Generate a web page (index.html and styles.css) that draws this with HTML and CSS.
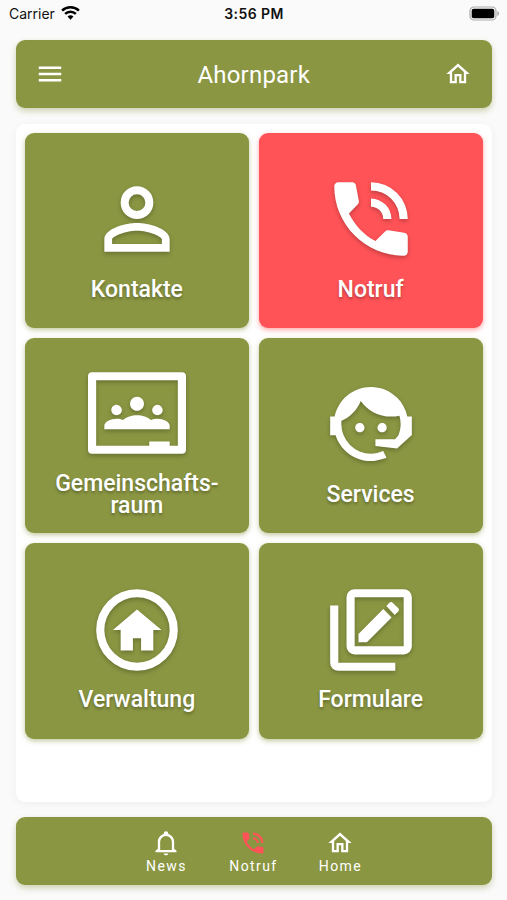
FILE: index.html
```html
<!DOCTYPE html>
<html lang="de">
<head>
    <meta charset="UTF-8">
    <meta name="viewport" content="width=device-width, initial-scale=1.0">
    <title>Ahornpark</title>
    <link rel="stylesheet" href="styles.css">
</head>
<body>
    <div class="statusbar">
        <div class="carrier">
            <span>Carrier</span>
            <svg class="wifi" viewBox="0 0 18 14">
                <path d="M1 5.2a11.5 11.5 0 0 1 16 0" />
                <path d="M3.9 8.3a7.3 7.3 0 0 1 10.2 0" />
                <path class="dot" d="M9 13.8L6.2 10.9a4 4 0 0 1 5.6 0z" />
            </svg>
        </div>
        <div class="time">3:56 PM</div>
        <div class="status-right">
            <svg class="battery" viewBox="0 0 31 15">
                <rect class="shell" x="1" y="1" width="26" height="13" rx="4" />
                <rect x="2.7" y="2.7" width="22.6" height="9.6" rx="2" />
                <path class="cap" d="M28.3 5c2.4.8 2.4 4.2 0 5z" />
            </svg>
        </div>
    </div>

    <header class="bar header">
        <svg class="icon menu" viewBox="0 0 24 24"><path d="M3 6h18v2H3zM3 11h18v2H3zM3 16h18v2H3z" /></svg>
        <h1>Ahornpark</h1>
        <svg class="icon" viewBox="0 0 24 24"><path d="M12 5.69L17 10.19V18H15V12H9V18H7V10.19L12 5.69M12 3L2 12H5V20H11V14H13V20H19V12H22" /></svg>
    </header>

    <main class="content">
        <a class="tile">
            <svg viewBox="0 0 24 24"><path d="M12 4a4 4 0 1 1 0 8a4 4 0 0 1 0-8m0 1.95a2.05 2.05 0 1 0 0 4.1a2.05 2.05 0 0 0 0-4.1M12 13c2.67 0 8 1.33 8 4v3H4v-3c0-2.67 5.33-4 8-4m0 1.9c-2.97 0-6.1 1.46-6.1 2.1v1.1h12.2V17c0-.64-3.13-2.1-6.1-2.1z" /></svg>
            <span>Kontakte</span>
        </a>
        <a class="tile alert">
            <svg viewBox="0 0 24 24"><path d="M15 12h2a5 5 0 0 0-5-5v2a3 3 0 0 1 3 3M19 12h2a9 9 0 0 0-9-9v2a7 7 0 0 1 7 7M4 3h3.4c.5 0 .86.35.92.85L9.03 7.6c.04.3-.05.58-.25.8L6.6 10.65c1.4 2.83 3.7 5.3 6.5 6.75l2.35-2.35c.23-.23.5-.33.82-.28l3.85.6c.5.06.88.45.88.95V20c0 .55-.45 1-1 1C10.61 21 3 13.39 3 4c0-.55.45-1 1-1z" /></svg>
            <span>Notruf</span>
        </a>
        <a class="tile">
            <svg viewBox="0 0 24 24"><path d="M23 2H1A1 1 0 0 0 0 3V21A1 1 0 0 0 1 22H23A1 1 0 0 0 24 21V3A1 1 0 0 0 23 2M22 20H20V19H15V20H2V4H22V20M10.29 9.71A1.71 1.71 0 0 1 12 8C12.95 8 13.71 8.77 13.71 9.71C13.71 10.66 12.95 11.43 12 11.43C11.05 11.43 10.29 10.66 10.29 9.71M5.71 11.29C5.71 10.58 6.29 10 7 10A1.29 1.29 0 0 1 8.29 11.29C8.29 12 7.71 12.57 7 12.57C6.29 12.57 5.71 12 5.71 11.29M15.71 11.29A1.29 1.29 0 0 1 17 10A1.29 1.29 0 0 1 18.29 11.29C18.29 12 17.71 12.57 17 12.57C16.29 12.57 15.71 12 15.71 11.29M20 15.14V16H4V15.14C4 14.2 5.55 13.43 7 13.43C7.55 13.43 8.11 13.54 8.6 13.73C9.35 13.04 10.7 12.57 12 12.57C13.3 12.57 14.65 13.04 15.4 13.73C15.89 13.54 16.45 13.43 17 13.43C18.45 13.43 20 14.2 20 15.14Z" /></svg>
            <span>Gemeinschafts-<br>raum</span>
        </a>
        <a class="tile">
            <svg viewBox="0 0 24 24"><path d="M18.72 14.76C19.07 13.91 19.26 13 19.26 12C19.26 11.28 19.15 10.59 18.96 9.95C18.31 10.1 17.63 10.18 16.92 10.18C13.86 10.18 11.15 8.67 9.5 6.34C8.61 8.5 6.91 10.26 4.77 11.22C4.73 11.47 4.73 11.74 4.73 12A7.27 7.27 0 0 0 12 19.27C13.05 19.27 14.06 19.04 14.97 18.63C15.54 19.72 15.8 20.26 15.78 20.26C14.14 20.81 12.87 21.08 12 21.08C9.58 21.08 7.27 20.13 5.57 18.42C4.53 17.38 3.76 16.11 3.33 14.73H2V10.18H3.09C3.93 6.04 7.6 2.92 12 2.92C14.4 2.92 16.71 3.87 18.42 5.58C19.69 6.84 20.54 8.45 20.89 10.18H22V14.73H21.94L18.38 18L13.08 17.4V15.73H17.91L18.72 14.76M9.27 11.77C9.57 11.77 9.86 11.89 10.07 12.11C10.28 12.32 10.4 12.61 10.4 12.91C10.4 13.21 10.28 13.5 10.07 13.71C9.86 13.92 9.57 14.04 9.27 14.04C8.64 14.04 8.13 13.54 8.13 12.91C8.13 12.28 8.64 11.77 9.27 11.77M14.72 11.77C15.35 11.77 15.85 12.28 15.85 12.91C15.85 13.54 15.35 14.04 14.72 14.04C14.09 14.04 13.58 13.54 13.58 12.91A1.14 1.14 0 0 1 14.72 11.77Z" /></svg>
            <span>Services</span>
        </a>
        <a class="tile">
            <svg viewBox="0 0 24 24"><path d="M12 2a10 10 0 1 1 0 20a10 10 0 0 1 0-20m0 2a8 8 0 1 0 0 16a8 8 0 0 0 0-16M12 7l6 5h-2v5h-3v-3h-2v3H8v-5H6.1z" /></svg>
            <span>Verwaltung</span>
        </a>
        <a class="tile">
            <svg viewBox="0 0 24 24"><path d="M4 20H17.95V22H4A2 2 0 0 1 2 20V6H4M8 2H20A2 2 0 0 1 22 4V16A2 2 0 0 1 20 18H8A2 2 0 0 1 6 16V4A2 2 0 0 1 8 2M8 4V16H20V4M8.94 12.96V15H11L17.04 8.93L15 6.85M16.5 5.3Q16.9 4.95 17.3 5.3L18.7 6.7Q19.05 7.1 18.7 7.45L17.8 8.3L15.75 6.15z" /></svg>
            <span>Formulare</span>
        </a>
    </main>

    <nav class="bar tabs">
        <a class="tab">
            <svg class="icon" viewBox="0 0 24 24"><path d="M10 21h4c0 .9-.9 1.6-2 1.6s-2-.7-2-1.6M21 18.6V20H3v-1.4l2-1.6v-6c0-3.1 2.03-5.83 5-6.71V4a2 2 0 0 1 4 0v.29c2.97.88 5 3.61 5 6.71v6l2 1.6M17 11a5 5 0 0 0-10 0v7h10z" /></svg>
            <span>News</span>
        </a>
        <a class="tab active">
            <svg class="icon" viewBox="0 0 24 24"><path d="M15 12h2a5 5 0 0 0-5-5v2a3 3 0 0 1 3 3M19 12h2a9 9 0 0 0-9-9v2a7 7 0 0 1 7 7M4 3h3.4c.5 0 .86.35.92.85L9.03 7.6c.04.3-.05.58-.25.8L6.6 10.65c1.4 2.83 3.7 5.3 6.5 6.75l2.35-2.35c.23-.23.5-.33.82-.28l3.85.6c.5.06.88.45.88.95V20c0 .55-.45 1-1 1C10.61 21 3 13.39 3 4c0-.55.45-1 1-1z" /></svg>
            <span>Notruf</span>
        </a>
        <a class="tab">
            <svg class="icon" viewBox="0 0 24 24"><path d="M12 5.69L17 10.19V18H15V12H9V18H7V10.19L12 5.69M12 3L2 12H5V20H11V14H13V20H19V12H22" /></svg>
            <span>Home</span>
        </a>
    </nav>
</body>
</html>
```
FILE: styles.css
```css
* {
    box-sizing: border-box;
}
body {
    margin: 0;
    height: 900px;
    padding: 0 15px 15px 15.5px;
    display: flex;
    flex-direction: column;
    overflow: hidden;
    background-color: #fafafa;
    font-family: Roboto, sans-serif;
    color: #fff;
}
svg {
    display: block;
    fill: currentColor;
    fill-rule: evenodd;
}
.statusbar {
    height: 40px;
    margin: 0 -7px 0 -6.5px;
    padding-bottom: 13px;
    display: grid;
    grid-template-columns: 1fr auto 1fr;
    align-items: center;
    font-family: Inter, sans-serif;
    font-size: 14px;
    color: #111;
}
.carrier {
    display: flex;
    align-items: center;
    gap: 6px;
}
.wifi {
    width: 19px;
    height: 15px;
    margin-top: -3px;
}
.wifi path {
    fill: none;
    stroke: #000;
    stroke-width: 2.3;
}
.wifi .dot {
    fill: #000;
    stroke: none;
}
.time {
    font-weight: 600;
    letter-spacing: 0.4px;
}
.battery {
    width: 31px;
    height: 15px;
    margin-top: -1px;
    margin-right: -1px;
    margin-left: auto;
    fill: #000;
}
.battery .shell {
    fill: #fafafa;
    stroke: #aaa;
    stroke-width: 1.2;
}
.battery .cap {
    fill: #aaa;
}
.bar {
    height: 68px;
    flex: none;
    border-radius: 9px;
    background-color: #8a9642;
    box-shadow: 0 3px 6px rgba(138, 150, 66, 0.4);
}
.icon {
    width: 28px;
    height: 28px;
}
.header {
    display: flex;
    align-items: center;
    justify-content: space-between;
    padding: 0 20px 0 19px;
}
.header .menu {
    width: 30px;
    height: 30px;
}
.header h1 {
    margin: 1px 1px 0 0;
    font-size: 24px;
    font-weight: 400;
    letter-spacing: 0.2px;
}
.content {
    flex: 1;
    margin: 16px 0 15px;
    padding: 9px 9.5px;
    display: grid;
    grid-template-columns: 1fr 1fr;
    grid-auto-rows: 195.2px;
    gap: 10px;
    border-radius: 9px;
    background-color: #fff;
    box-shadow: 0 2px 10px rgba(0, 0, 0, 0.05);
}
.tile {
    display: flex;
    flex-direction: column;
    align-items: center;
    justify-content: center;
    padding-top: 10px;
    border-radius: 9px;
    background-color: #8a9642;
    box-shadow: 0 2px 5px rgba(138, 150, 66, 0.5);
    font-size: 23px;
    font-weight: 500;
    line-height: 22px;
    text-align: center;
    text-shadow: 0 2px 3px rgba(0, 0, 0, 0.3);
}
.tile svg {
    width: 98px;
    height: 98px;
    margin-bottom: 10.7px;
    filter: drop-shadow(0 2px 2px rgba(0, 0, 0, 0.25));
}
.alert {
    background-color: #ff5357;
    box-shadow: 0 2px 5px rgba(255, 83, 87, 0.5);
}
.tabs {
    display: flex;
    align-items: center;
    justify-content: center;
    padding: 1px 2px 0 0;
}
.tab {
    width: 87px;
    display: flex;
    flex-direction: column;
    align-items: center;
    gap: 1px;
    font-size: 14px;
    line-height: 17px;
    letter-spacing: 1.4px;
}
.tab span {
    margin-right: -1.4px;
}
.active svg {
    color: #ff5357;
}
```
